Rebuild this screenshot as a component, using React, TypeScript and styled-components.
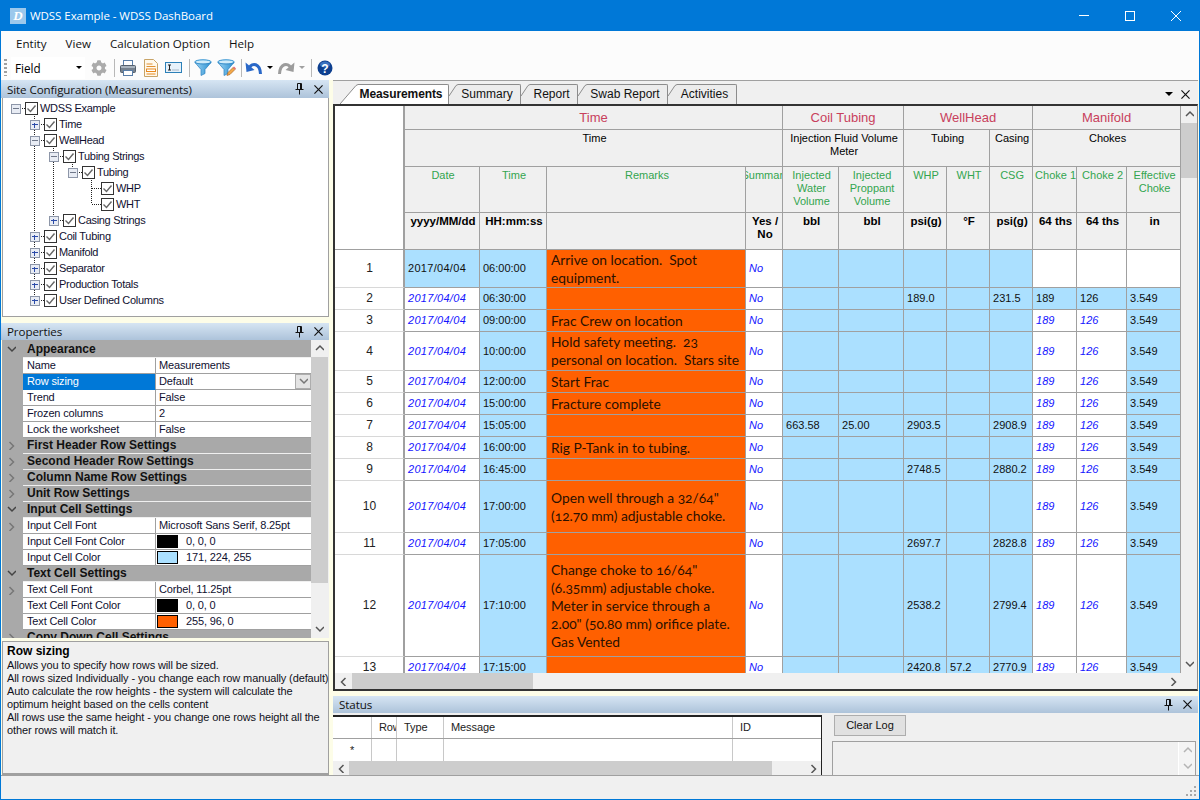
import React from "react";
import styled, { createGlobalStyle } from "styled-components";
import { FaCog } from "react-icons/fa";

const GlobalStyle = createGlobalStyle`
  html, body { margin: 0; padding: 0; background: #fff; }
  * { box-sizing: border-box; }
`;

const UI = `"Liberation Sans", Arial, sans-serif`;
const CHROME = `"Open Sans", "Noto Sans", sans-serif`;
const LINE = "#a0a0a0";
const INPUT = "#abe0ff";

const Win = styled.div`
  width: 1200px;
  height: 800px;
  display: flex;
  flex-direction: column;
  overflow: hidden;
  border: 1px solid #0078d7;
  border-top: 0;
  background: #f0f0f0;
  color: #000;
  font: 11px/13px ${UI};
`;

/* ---------- title / menu / toolbar ---------- */
const TitleBar = styled.div`
  height: 31px;
  flex: none;
  display: flex;
  align-items: center;
  background: #0078d7;
  color: #fff;
  padding-left: 9px;
  font: 11.5px ${CHROME};
`;
const Logo = styled.div`
  width: 16px;
  height: 16px;
  margin-right: 4px;
  background: #9cc8ec;
  display: flex;
  align-items: center;
  justify-content: center;
  font: italic bold 13px "Liberation Serif", serif;
  color: #fff;
`;
const TitleText = styled.span`
  flex: 1;
  letter-spacing: -0.05px;
`;
const WinButton = styled.div`
  width: 46px;
  height: 31px;
  display: flex;
  align-items: center;
  justify-content: center;
`;
const MenuBar = styled.div`
  height: 24px;
  flex: none;
  display: flex;
  align-items: center;
  padding-left: 15px;
  gap: 19px;
  background: #fcfcfc;
  font: 11.6px ${CHROME};
  color: #111;
`;
const ToolBar = styled.div`
  height: 25px;
  flex: none;
  display: flex;
  align-items: center;
  padding-left: 3px;
  background: #fcfcfc;
`;
const Grip = styled.div`
  width: 3px;
  height: 17px;
  margin-right: 4px;
  background: repeating-linear-gradient(to bottom, #a0a0a0 0 2px, transparent 2px 4px);
`;
const Combo = styled.div`
  width: 74px;
  height: 22px;
  margin-right: 3px;
  display: flex;
  align-items: center;
  justify-content: space-between;
  padding: 0 3px 0 4px;
  background: #fff;
  font: 11.7px ${CHROME};
`;
const Caret = styled.div<{ $off?: boolean; $big?: boolean }>`
  width: 0;
  height: 0;
  border-left: ${(p) => (p.$big ? 4 : 3)}px solid transparent;
  border-right: ${(p) => (p.$big ? 4 : 3)}px solid transparent;
  border-top: ${(p) => (p.$big ? 4 : 3)}px solid ${(p) => (p.$off ? "#a0a0a0" : "#000")};
`;
const ToolSep = styled.div<{ $l: number; $r: number }>`
  width: 1px;
  height: 18px;
  background: #b8b8b8;
  margin: 0 ${(p) => p.$r}px 0 ${(p) => p.$l}px;
`;
const Tool = styled.div<{ $w?: number }>`
  width: ${(p) => p.$w ?? 22}px;
  height: 22px;
  flex: none;
  display: flex;
  align-items: center;
  justify-content: center;
`;

/* ---------- docks ---------- */
const Main = styled.div`
  flex: 1;
  min-height: 0;
  display: flex;
  gap: 4px;
  background: #fdfde8;
`;
const LeftCol = styled.div`
  width: 328px;
  flex: none;
  display: flex;
  flex-direction: column;
`;
const DockHeader = styled.div<{ $h: number }>`
  height: ${(p) => p.$h}px;
  flex: none;
  display: flex;
  align-items: center;
  padding: 0 6px 0 6px;
  background: linear-gradient(to bottom, #d6e5f3, #adc3da);
  font: 11.6px ${CHROME};
  letter-spacing: -0.1px;
  color: #111;
`;
const DockTitle = styled.span`
  flex: 1;
`;
const DockButtons = styled.div`
  display: flex;
  align-items: center;
  gap: 10px;
`;
const TreePane = styled.div`
  height: 219px;
  flex: none;
  margin-left: 1px;
  padding: 2px 0 0 3px;
  background: #fff;
  border: 1px solid ${LINE};
  border-top: 0;
`;
const TreeRow = styled.div`
  height: 16px;
  display: flex;
  align-items: center;
`;
const TreeLabel = styled.span`
  margin-left: 2px;
  color: #101030;
  white-space: nowrap;
  letter-spacing: -0.3px;
`;
const DockGap = styled.div`
  height: 6px;
  flex: none;
`;
const PropWrap = styled.div`
  height: 298px;
  flex: none;
  margin: 0 0 3px 1px;
  display: flex;
  overflow: hidden;
  background: #f0f0f0;
`;
const PropList = styled.div`
  width: 309px;
  flex: none;
  padding-top: 2px;
  background: #a9a9a9;
  overflow: hidden;
  letter-spacing: -0.15px;
`;
const PropGroup = styled.div`
  height: 16px;
  display: flex;
  align-items: center;
  background: #a9a9a9;
  border-bottom: 1px solid #f0f0f0;
  font-weight: bold;
  font-size: 12px;
  letter-spacing: 0;
  color: #111;
`;
const Gutter = styled.div`
  width: 21px;
  height: 16px;
  flex: none;
  display: flex;
  align-items: center;
  justify-content: center;
  padding-right: 2px;
  background: #a9a9a9;
`;
const GroupName = styled.span`
  margin-left: 4px;
  white-space: nowrap;
`;
const PropRow = styled.div`
  height: 16px;
  display: flex;
`;
const PropName = styled.div<{ $sel?: boolean }>`
  width: 133px;
  flex: none;
  padding-left: 4px;
  line-height: 15px;
  white-space: nowrap;
  background: ${(p) => (p.$sel ? "#0078d7" : "#fff")};
  color: ${(p) => (p.$sel ? "#fff" : "#101030")};
  border-bottom: 1px solid ${(p) => (p.$sel ? "#0078d7" : LINE)};
  border-right: 1px solid ${LINE};
`;
const PropValue = styled.div`
  flex: 1;
  display: flex;
  align-items: center;
  gap: 8px;
  padding-left: 3px;
  height: 16px;
  white-space: nowrap;
  background: #fff;
  color: #101030;
  border-bottom: 1px solid ${LINE};
`;
const Swatch = styled.span<{ $color: string }>`
  width: 21px;
  height: 13px;
  flex: none;
  margin-left: -2px;
  background: ${(p) => p.$color};
  border: 1px solid #000;
`;
const DropButton = styled.div`
  width: 16px;
  height: 15px;
  margin-left: auto;
  display: flex;
  align-items: center;
  justify-content: center;
  background: #e4e4e4;
  border: 1px solid #adadad;
`;
const PropScroll = styled.div`
  width: 17px;
  flex: none;
  display: flex;
  flex-direction: column;
  background: #f0f0f0;
`;
const ScrollEnd = styled.div<{ $size?: number }>`
  flex: none;
  width: ${(p) => p.$size ?? 16}px;
  height: ${(p) => p.$size ?? 16}px;
  display: flex;
  align-items: center;
  justify-content: center;
`;
const VThumb = styled.div<{ $top: number; $h: number }>`
  flex: none;
  margin-top: ${(p) => p.$top}px;
  height: ${(p) => p.$h}px;
  background: #cdcdcd;
`;
const Spacer = styled.div`
  flex: 1;
`;
const HelpPane = styled.div`
  flex: 1;
  margin-left: 1px;
  padding: 3px 4px 0 4px;
  background: #f0f0f0;
  border: 1px solid ${LINE};
  border-bottom-width: 2px;
  color: #101020;
`;
const HelpTitle = styled.div`
  font-weight: bold;
  font-size: 12px;
  height: 14px;
  color: #000;
`;
const HelpLine = styled.div`
  white-space: nowrap;
  letter-spacing: -0.12px;
`;

/* ---------- right side ---------- */
const RightCol = styled.div`
  flex: 1;
  min-width: 0;
  display: flex;
  flex-direction: column;
  padding-right: 1px;
`;
const TabStrip = styled.div`
  height: 24px;
  flex: none;
  display: flex;
  align-items: flex-end;
  padding-left: 7px;
  background: #f0f0f0;
  border-top: 1px solid ${LINE};
`;
const TabItem = styled.div`
  display: flex;
  height: 20px;
`;
const TabBody = styled.div<{ $active?: boolean; $w: number }>`
  width: ${(p) => p.$w}px;
  height: 20px;
  display: flex;
  align-items: center;
  justify-content: center;
  padding-right: 4px;
  border-top: 1px solid #8c8c8c;
  border-right: 1px solid #8c8c8c;
  background: ${(p) => (p.$active ? "#fff" : "#ececec")};
  font-size: 12px;
  font-weight: ${(p) => (p.$active ? "bold" : "normal")};
  letter-spacing: ${(p) => (p.$active ? "-0.1px" : "0")};
  white-space: nowrap;
  border-radius: 0 2px 0 0;
  color: #111;
`;
const TabButtons = styled.div`
  margin-left: auto;
  height: 20px;
  display: flex;
  align-items: center;
  gap: 8px;
  padding-right: 8px;
`;
const Frame = styled.div`
  height: 587px;
  flex: none;
  display: flex;
  border: 2px solid #333;
  border-right: 1px solid #8c8c8c;
  background: #f0f0f0;
`;
const GridSide = styled.div`
  width: 846px;
  flex: none;
  display: flex;
  flex-direction: column;
`;
const GridViewport = styled.div`
  height: 567px;
  flex: none;
  overflow: hidden;
  background: #fff;
`;
const GridScrollV = styled.div`
  width: 16px;
  flex: none;
  display: flex;
  flex-direction: column;
`;
const HScroll = styled.div<{ $h?: number }>`
  height: ${(p) => p.$h ?? 15}px;
  flex: none;
  display: flex;
  align-items: center;
  background: #f0f0f0;
`;
const HThumb = styled.div<{ $left: number; $w: number }>`
  height: 100%;
  margin-left: ${(p) => p.$left}px;
  width: ${(p) => p.$w}px;
  background: #cdcdcd;
`;

const Table = styled.table`
  table-layout: fixed;
  width: 846px;
  border-collapse: separate;
  border-spacing: 0;
  font: 11px/13px ${UI};
`;
const Corner = styled.th`
  background: #fff;
  border-right: 2px solid ${LINE};
  border-bottom: 1px solid ${LINE};
  padding: 0;
`;
const Head = styled.th<{ $tone: "group" | "sub" | "name" | "unit" }>`
  padding: ${(p) => (p.$tone === "group" ? 0 : 2)}px 0 0 ${(p) => (p.$tone === "group" ? 0 : 2)}px;
  background: #f0f0f0;
  vertical-align: ${(p) => (p.$tone === "group" ? "middle" : "top")};
  border-right: 1px solid ${LINE};
  border-bottom: 1px solid ${LINE};
  overflow: hidden;
  font-weight: ${(p) => (p.$tone === "unit" ? "bold" : "normal")};
  font-size: ${(p) => (p.$tone === "group" ? 13 : p.$tone === "unit" ? 11.5 : 11)}px;
  color: ${(p) => (p.$tone === "group" ? "#c8405c" : p.$tone === "name" ? "#33a54f" : "#000")};
`;
const HeadText = styled.div`
  display: flex;
  justify-content: center;
  white-space: pre;
  text-align: center;
`;
const RowHead = styled.td`
  text-align: center;
  padding: 0 0 0 1px;
  background: #fff;
  border-right: 2px solid ${LINE};
  border-bottom: 1px solid #d8d8d8;
  font-size: 12px;
  color: #222;
`;
const Cell = styled.td<{ $kind: "input" | "calc" | "blank" }>`
  padding: 0 0 0 3px;
  background: ${(p) => (p.$kind === "input" ? INPUT : "#fff")};
  color: ${(p) => (p.$kind === "calc" ? "#1414ff" : "#111")};
  font-style: ${(p) => (p.$kind === "calc" ? "italic" : "normal")};
  border-right: 1px solid ${LINE};
  border-bottom: 1px solid ${LINE};
  white-space: nowrap;
  overflow: hidden;
`;
const DateCell = styled(Cell)`
  letter-spacing: 0.3px;
`;
const RemarkCell = styled.td`
  padding: 0 0 0 4px;
  background: #ff6000;
  color: #2a1000;
  border-right: 1px solid ${LINE};
  border-bottom: 1px solid ${LINE};
  font: 13.8px/18px Lato, "Open Sans", sans-serif;
  font-variant-numeric: oldstyle-nums;
  white-space: pre;
  overflow: hidden;
`;

const StatusPanel = styled.div`
  flex: 1;
  min-height: 0;
  margin-top: 5px;
  display: flex;
  flex-direction: column;
  background: #f0f0f0;
`;
const StatusBody = styled.div`
  flex: 1;
  min-height: 0;
  display: flex;
`;
const LogGrid = styled.div`
  width: 489px;
  flex: none;
  margin-top: 2px;
  display: flex;
  flex-direction: column;
  background: #fff;
  border-top: 2px solid #222;
  border-right: 1px solid #222;
`;
const LogRow = styled.div<{ $h: number; $head?: boolean }>`
  height: ${(p) => p.$h}px;
  flex: none;
  display: grid;
  grid-template-columns: 39px 25px 47px 289px 1fr;
  border-bottom: ${(p) => (p.$head ? `1px solid ${LINE}` : "0")};
`;
const LogCell = styled.div<{ $mark?: boolean }>`
  display: flex;
  align-items: center;
  justify-content: ${(p) => (p.$mark ? "center" : "flex-start")};
  padding-left: ${(p) => (p.$mark ? 0 : 7)}px;
  border-right: 1px solid #c8c8c8;
  overflow: hidden;
  white-space: nowrap;
  letter-spacing: -0.1px;
  color: #222;
  &:last-child {
    border-right: 0;
  }
`;
const LogSide = styled.div`
  flex: 1;
  display: flex;
  flex-direction: column;
  padding: 2px 2px 0 10px;
`;
const ClearButton = styled.div`
  width: 72px;
  height: 21px;
  margin-left: 2px;
  display: flex;
  align-items: center;
  justify-content: center;
  background: #e1e1e1;
  border: 1px solid #adadad;
  color: #111;
`;
const LogBox = styled.div`
  flex: 1;
  margin-top: 5px;
  display: flex;
  justify-content: flex-end;
  background: #f0f0f0;
  border: 1px solid ${LINE};
  border-bottom: 0;
`;
const LogBoxScroll = styled.div`
  width: 17px;
  display: flex;
  flex-direction: column;
  align-items: center;
  background: #f4f4f4;
  border-left: 1px solid #fff;
`;
const StatusBar = styled.div`
  height: 24px;
  flex: none;
  display: flex;
  align-items: flex-end;
  justify-content: flex-end;
  padding: 0 2px 2px 0;
  background: #f0f0f0;
  border-top: 1px solid ${LINE};
`;

/* ---------- drawings ---------- */
const Pin = () => (
  <svg width="9" height="12" viewBox="0 0 9 12" fill="none" stroke="#111">
    <path d="M2.5 .5h4v6h-4zM5.5 1v5.5M.5 6.5h8M4.5 7v4.5" />
  </svg>
);
const CloseX = () => (
  <svg width="9" height="9" viewBox="0 0 10 10" stroke="#111" strokeWidth="1.3">
    <path d="M.5 .5l9 9M9.5 .5l-9 9" />
  </svg>
);
const Chev = ({ dir, color = "#555" }: { dir: "up" | "down" | "left" | "right"; color?: string }) => {
  const d = { up: "M1 6l4-4 4 4", down: "M1 2l4 4 4-4", left: "M6.5 1l-4 4 4 4", right: "M2.5 1l4 4-4 4" }[dir];
  return (
    <svg width="9" height="9" viewBox="0 0 9 9" fill="none" stroke={color} strokeWidth="1.5">
      <path d={d} />
    </svg>
  );
};
const Dots = ({ d }: { d: string }) => <path d={d} stroke="#222" strokeDasharray="1 1" fill="none" />;

/* one 19px wide cell of tree lines: v = vertical guide, exp = +/- box, h = branch */
const TreeCell = ({ v, exp, h }: { v?: "full" | "top"; exp?: "+" | "-"; h?: boolean }) => (
  <svg width="19" height="16" viewBox="0 0 19 16" style={{ flex: "none" }} shapeRendering="crispEdges">
    {v === "full" && <Dots d="M9.5 0V16" />}
    {v === "top" && <Dots d="M9.5 0V8" />}
    {h && <Dots d="M10 8.5H19" />}
    {exp && (
      <>
        <rect x="5.5" y="4.5" width="9" height="9" fill="#e8ecf4" stroke="#8d96a8" />
        <path d="M7 9H13" stroke={exp === "+" ? "#2a4aa8" : "#70788a"} transform="translate(0 -.5)" />
        {exp === "+" && <path d="M10 6.5V11.5" stroke="#2a4aa8" transform="translate(-.5 0)" />}
      </>
    )}
  </svg>
);
const Check = () => (
  <svg width="13" height="13" viewBox="0 0 13 13" style={{ flex: "none" }}>
    <rect x=".5" y=".5" width="12" height="12" fill="#fff" stroke="#333" />
    <path d="M2.5 6.5l3 3 5-6" fill="none" stroke="#666" strokeWidth="1.4" />
  </svg>
);
const Gear = () => <FaCog size={16} color="#ababab" />;
const Printer = () => (
  <svg width="18" height="18" viewBox="0 0 18 18">
    <rect x="4.5" y="1.5" width="9" height="6" fill="#fff" stroke="#5a7ea8" />
    <rect x="1.5" y="6.5" width="15" height="7" rx="1" fill="#77828e" stroke="#56606c" />
    <rect x="2" y="7" width="14" height="2" fill="#aab4be" />
    <rect x="4.5" y="11.5" width="9" height="5" fill="#fff" stroke="#5a7ea8" />
  </svg>
);
const DocIcon = () => (
  <svg width="14" height="18" viewBox="0 0 14 18">
    <path d="M.5 .5h9l4 4v13H.5z" fill="#fff9ec" stroke="#c8a468" />
    <path d="M2.5 5h6M2.5 7.5h9" stroke="#e09030" />
    <rect x="2.5" y="10" width="9" height="2.5" fill="#fff" stroke="#e88a20" />
    <path d="M2.5 15h9" stroke="#e88a20" />
  </svg>
);
const FieldIcon = () => (
  <svg width="17" height="11" viewBox="0 0 17 11">
    <rect x=".5" y=".5" width="16" height="10" fill="#e6f1fa" stroke="#2c80b8" />
    <path d="M3 3h3M3 8h3M4.5 3v5" stroke="#222" fill="none" />
    <path d="M7 8h7" stroke="#a8b8c8" />
  </svg>
);
const Funnel = ({ pencil }: { pencil?: boolean }) => (
  <svg width="19" height="18" viewBox="0 0 19 18">
    <defs>
      <linearGradient id="fn" x1="0" y1="0" x2="1" y2="0">
        <stop offset="0" stopColor="#9ad4f4" />
        <stop offset="1" stopColor="#2a8fd0" />
      </linearGradient>
    </defs>
    <ellipse cx="9" cy="3" rx="8.2" ry="2.2" fill="#d0ecfa" stroke="#2a8fd0" />
    <path d="M1 3.5l6 7v6l4-2v-4l6-7c-3 2-13 2-16 0z" fill="url(#fn)" stroke="#2a80c0" strokeWidth=".7" />
    {pencil && (
      <>
        <path d="M10 16.5l1-3 5-5 2 2-5 5z" fill="#f4a848" stroke="#9a5a20" strokeWidth=".6" />
        <path d="M16 8.5l2 2 1-1-2-2z" fill="#e86870" />
      </>
    )}
  </svg>
);
const ArcArrow = ({ color, flip }: { color: string; flip?: boolean }) => (
  <svg width="18" height="16" viewBox="0 0 18 16" style={{ transform: flip ? "scaleX(-1)" : undefined }}>
    <path d="M4.5 7.5C7 2.5 15 3 15.5 14" fill="none" stroke={color} strokeWidth="3" />
    <path d="M.5 2.5L1.5 12l8-2z" fill={color} />
  </svg>
);
const HelpIcon = () => (
  <svg width="16" height="16" viewBox="0 0 16 16">
    <circle cx="8" cy="8" r="7.5" fill="#0d3f8f" />
    <ellipse cx="8" cy="4.5" rx="5" ry="3" fill="#3a72c0" />
    <text x="8" y="12.5" textAnchor="middle" fontSize="12" fontWeight="bold" fontFamily="Liberation Sans" fill="#fff">?</text>
  </svg>
);
const TabEdge = ({ active }: { active?: boolean }) =>
  active ? (
    <svg width="18" height="20" viewBox="0 0 18 20" style={{ flex: "none" }}>
      <path d="M0 20L16 1.5 18 .5V20z" fill="#fff" />
      <path d="M0 20L16 1.5 18 .5" fill="none" stroke="#8c8c8c" />
    </svg>
  ) : (
    <svg width="9" height="20" viewBox="0 0 9 20" style={{ flex: "none" }}>
      <path d="M0 12L7 1.5 9 .5V20H0z" fill="#ececec" />
      <path d="M0 12L7 1.5 9 .5" fill="none" stroke="#8c8c8c" />
    </svg>
  );

/* ---------- data ---------- */
type TreeItem = { label: string; cells: Array<{ v?: "full" | "top"; exp?: "+" | "-"; h?: boolean }> };
const P = (exp: "+" | "-", v: "full" | "top" = "full") => ({ v, exp, h: true });
const G = { v: "full" as const };
const E = {};
const tree: TreeItem[] = [
  { label: "WDSS Example", cells: [{ exp: "-", h: true }] },
  { label: "Time", cells: [E, P("+")] },
  { label: "WellHead", cells: [E, P("-")] },
  { label: "Tubing Strings", cells: [E, G, P("-")] },
  { label: "Tubing", cells: [E, G, G, P("-", "top")] },
  { label: "WHP", cells: [E, G, G, E, { v: "full", h: true }] },
  { label: "WHT", cells: [E, G, G, E, { v: "top", h: true }] },
  { label: "Casing Strings", cells: [E, G, P("+", "top")] },
  { label: "Coil Tubing", cells: [E, P("+")] },
  { label: "Manifold", cells: [E, P("+")] },
  { label: "Separator", cells: [E, P("+")] },
  { label: "Production Totals", cells: [E, P("+")] },
  { label: "User Defined Columns", cells: [E, P("+", "top")] },
];

type Prop =
  | { group: string; open?: boolean }
  | { name: string; value: string; color?: string; sel?: boolean; more?: boolean };
const props: Prop[] = [
  { group: "Appearance", open: true },
  { name: "Name", value: "Measurements" },
  { name: "Row sizing", value: "Default", sel: true },
  { name: "Trend", value: "False" },
  { name: "Frozen columns", value: "2" },
  { name: "Lock the worksheet", value: "False" },
  { group: "First Header Row Settings" },
  { group: "Second Header Row Settings" },
  { group: "Column Name Row Settings" },
  { group: "Unit Row Settings" },
  { group: "Input Cell Settings", open: true },
  { name: "Input Cell Font", value: "Microsoft Sans Serif, 8.25pt", more: true },
  { name: "Input Cell Font Color", value: "0, 0, 0", color: "#000" },
  { name: "Input Cell Color", value: "171, 224, 255", color: INPUT },
  { group: "Text Cell Settings", open: true },
  { name: "Text Cell Font", value: "Corbel, 11.25pt", more: true },
  { name: "Text Cell Font Color", value: "0, 0, 0", color: "#000" },
  { name: "Text Cell Color", value: "255, 96, 0", color: "#ff6000" },
  { group: "Copy Down Cell Settings" },
];

const helpLines = [
  "Allows you to specify how rows will be sized.",
  "All rows sized Individually - you change each row manually (default)",
  "Auto calculate the row heights - the system will calculate the",
  "optimum height based on the cells content",
  "All rows use the same height - you change one rows height all the",
  "other rows will match it.",
];

const tabs = [
  { label: "Measurements", w: 91, active: true },
  { label: "Summary", w: 63 },
  { label: "Report", w: 48 },
  { label: "Swab Report", w: 81 },
  { label: "Activities", w: 60 },
];

const widths = [70, 75, 67, 199, 37, 56, 65, 43, 43, 43, 44, 50, 54];

const names = ["Date", "Time", "Remarks", "Summary", "Injected\nWater\nVolume", "Injected\nProppant\nVolume", "WHP", "WHT", "CSG", "Choke 1", "Choke 2", "Effective\nChoke"];
const units = ["yyyy/MM/dd", "HH:mm:ss", "", "Yes /\nNo", "bbl", "bbl", "psi(g)", "°F", "psi(g)", "64 ths", "64 ths", "in"];

type Row = {
  h: number;
  time: string;
  remark?: string;
  water?: string;
  prop?: string;
  whp?: string;
  wht?: string;
  csg?: string;
};
const rows: Row[] = [
  { h: 38, time: "06:00:00", remark: "Arrive on location.  Spot\nequipment." },
  { h: 22, time: "06:30:00", whp: "189.0", csg: "231.5" },
  { h: 22, time: "09:00:00", remark: "Frac Crew on location" },
  { h: 39, time: "10:00:00", remark: "Hold safety meeting.  23\npersonal on location.  Stars site" },
  { h: 22, time: "12:00:00", remark: "Start Frac" },
  { h: 22, time: "15:00:00", remark: "Fracture complete" },
  { h: 22, time: "15:05:00", water: "663.58", prop: "25.00", whp: "2903.5", csg: "2908.9" },
  { h: 22, time: "16:00:00", remark: "Rig P-Tank in to tubing." },
  { h: 22, time: "16:45:00", whp: "2748.5", csg: "2880.2" },
  { h: 52, time: "17:00:00", remark: "Open well through a 32/64\"\n(12.70 mm) adjustable choke." },
  { h: 22, time: "17:05:00", whp: "2697.7", csg: "2828.8" },
  {
    h: 102,
    time: "17:10:00",
    remark: "Change choke to 16/64\"\n(6.35mm) adjustable choke.\nMeter in service through a\n2.00\" (50.80 mm) orifice plate.\nGas Vented",
    whp: "2538.2",
    csg: "2799.4",
  },
  { h: 22, time: "17:15:00", whp: "2420.8", wht: "57.2", csg: "2770.9" },
];

const DockTools = () => (
  <DockButtons>
    <Pin />
    <CloseX />
  </DockButtons>
);

export default function App() {
  return (
    <Win>
      <GlobalStyle />
      <TitleBar>
        <Logo>D</Logo>
        <TitleText>WDSS Example - WDSS DashBoard</TitleText>
        <WinButton>
          <svg width="10" height="1"><rect width="10" height="1" fill="#fff" /></svg>
        </WinButton>
        <WinButton>
          <svg width="10" height="10"><rect x=".5" y=".5" width="9" height="9" fill="none" stroke="#fff" /></svg>
        </WinButton>
        <WinButton>
          <svg width="10" height="10" stroke="#fff"><path d="M0 0l10 10M10 0L0 10" /></svg>
        </WinButton>
      </TitleBar>
      <MenuBar>
        <span>Entity</span>
        <span>View</span>
        <span>Calculation Option</span>
        <span>Help</span>
      </MenuBar>
      <ToolBar>
        <Grip />
        <Combo>
          Field
          <Caret />
        </Combo>
        <Tool><Gear /></Tool>
        <ToolSep $l={4} $r={2} />
        <Tool><Printer /></Tool>
        <Tool $w={23}><DocIcon /></Tool>
        <Tool><FieldIcon /></Tool>
        <ToolSep $l={5} $r={2} />
        <Tool $w={23}><Funnel /></Tool>
        <Tool><Funnel pencil /></Tool>
        <ToolSep $l={4} $r={1} />
        <Tool><ArcArrow color="#2a68c8" /></Tool>
        <Tool $w={10}><Caret /></Tool>
        <Tool><ArcArrow color="#9c9c9c" flip /></Tool>
        <Tool $w={10}><Caret $off /></Tool>
        <ToolSep $l={4} $r={2} />
        <Tool><HelpIcon /></Tool>
      </ToolBar>
      <Main>
        <LeftCol>
          <DockHeader $h={18}>
            <DockTitle>Site Configuration (Measurements)</DockTitle>
            <DockTools />
          </DockHeader>
          <TreePane>
            {tree.map((t) => (
              <TreeRow key={t.label}>
                {t.cells.map((c, i) => (
                  <TreeCell key={i} {...c} />
                ))}
                <Check />
                <TreeLabel>{t.label}</TreeLabel>
              </TreeRow>
            ))}
          </TreePane>
          <DockGap />
          <DockHeader $h={17}>
            <DockTitle>Properties</DockTitle>
            <DockTools />
          </DockHeader>
          <PropWrap>
            <PropList>
              {props.map((p) =>
                "group" in p ? (
                  <PropGroup key={p.group}>
                    <Gutter>
                      <Chev dir={p.open ? "down" : "right"} color={p.open ? "#444" : "#777"} />
                    </Gutter>
                    <GroupName>{p.group}</GroupName>
                  </PropGroup>
                ) : (
                  <PropRow key={p.name}>
                    <Gutter>{p.more && <Chev dir="right" color="#777" />}</Gutter>
                    <PropName $sel={p.sel}>{p.name}</PropName>
                    <PropValue>
                      {p.color && <Swatch $color={p.color} />}
                      {p.value}
                      {p.sel && (
                        <DropButton>
                          <Chev dir="down" color="#777" />
                        </DropButton>
                      )}
                    </PropValue>
                  </PropRow>
                ),
              )}
            </PropList>
            <PropScroll>
              <ScrollEnd $size={17}><Chev dir="up" /></ScrollEnd>
              <VThumb $top={0} $h={226} />
              <Spacer />
              <ScrollEnd $size={17}><Chev dir="down" /></ScrollEnd>
            </PropScroll>
          </PropWrap>
          <HelpPane>
            <HelpTitle>Row sizing</HelpTitle>
            {helpLines.map((l) => (
              <HelpLine key={l}>{l}</HelpLine>
            ))}
          </HelpPane>
        </LeftCol>

        <RightCol>
          <TabStrip>
            {tabs.map((t) => (
              <TabItem key={t.label}>
                <TabEdge active={t.active} />
                <TabBody $active={t.active} $w={t.w}>{t.label}</TabBody>
              </TabItem>
            ))}
            <TabButtons>
              <Caret $big />
              <CloseX />
            </TabButtons>
          </TabStrip>
          <Frame>
            <GridSide>
              <GridViewport>
                <Table>
                  <colgroup>
                    {widths.map((w, i) => (
                      <col key={i} style={{ width: w }} />
                    ))}
                  </colgroup>
                  <thead>
                    <tr style={{ height: 24 }}>
                      <Corner rowSpan={4} />
                      <Head $tone="group" colSpan={4}><HeadText>Time</HeadText></Head>
                      <Head $tone="group" colSpan={2}><HeadText>Coil Tubing</HeadText></Head>
                      <Head $tone="group" colSpan={3}><HeadText>WellHead</HeadText></Head>
                      <Head $tone="group" colSpan={3}><HeadText>Manifold</HeadText></Head>
                    </tr>
                    <tr style={{ height: 37 }}>
                      <Head $tone="sub" colSpan={4}><HeadText>Time</HeadText></Head>
                      <Head $tone="sub" colSpan={2}><HeadText>{"Injection Fluid Volume\nMeter"}</HeadText></Head>
                      <Head $tone="sub" colSpan={2}><HeadText>Tubing</HeadText></Head>
                      <Head $tone="sub"><HeadText>Casing</HeadText></Head>
                      <Head $tone="sub" colSpan={3}><HeadText>Chokes</HeadText></Head>
                    </tr>
                    <tr style={{ height: 46 }}>
                      {names.map((n) => (
                        <Head key={n} $tone="name"><HeadText>{n}</HeadText></Head>
                      ))}
                    </tr>
                    <tr style={{ height: 37 }}>
                      {units.map((u, i) => (
                        <Head key={i} $tone="unit"><HeadText>{u}</HeadText></Head>
                      ))}
                    </tr>
                  </thead>
                  <tbody>
                    {rows.map((r, i) => {
                      const first = i === 0;
                      const second = i === 1;
                      const choke = first ? "blank" : second ? "input" : "calc";
                      return (
                        <tr key={i} style={{ height: r.h }}>
                          <RowHead>{i + 1}</RowHead>
                          <DateCell $kind={first ? "input" : "calc"}>2017/04/04</DateCell>
                          <Cell $kind="input">{r.time}</Cell>
                          <RemarkCell>{r.remark}</RemarkCell>
                          <Cell $kind="calc">No</Cell>
                          <Cell $kind="input">{r.water}</Cell>
                          <Cell $kind="input">{r.prop}</Cell>
                          <Cell $kind="input">{r.whp}</Cell>
                          <Cell $kind="input">{r.wht}</Cell>
                          <Cell $kind="input">{r.csg}</Cell>
                          <Cell $kind={choke}>{first ? "" : "189"}</Cell>
                          <Cell $kind={choke}>{first ? "" : "126"}</Cell>
                          <Cell $kind={first ? "blank" : "input"}>{first ? "" : "3.549"}</Cell>
                        </tr>
                      );
                    })}
                  </tbody>
                </Table>
              </GridViewport>
              <HScroll $h={16}>
                <ScrollEnd><Chev dir="left" /></ScrollEnd>
                <HThumb $left={1} $w={181} />
                <Spacer />
                <ScrollEnd><Chev dir="right" /></ScrollEnd>
              </HScroll>
            </GridSide>
            <GridScrollV>
              <ScrollEnd><Chev dir="up" /></ScrollEnd>
              <VThumb $top={1} $h={55} />
              <Spacer />
              <ScrollEnd><Chev dir="down" /></ScrollEnd>
              <ScrollEnd $size={17} />
            </GridScrollV>
          </Frame>
          <StatusPanel>
            <DockHeader $h={17}>
              <DockTitle>Status</DockTitle>
              <DockTools />
            </DockHeader>
            <StatusBody>
              <LogGrid>
                <LogRow $h={22} $head>
                  <LogCell />
                  <LogCell>Row</LogCell>
                  <LogCell>Type</LogCell>
                  <LogCell>Message</LogCell>
                  <LogCell>ID</LogCell>
                </LogRow>
                <LogRow $h={22}>
                  <LogCell $mark>*</LogCell>
                  <LogCell />
                  <LogCell />
                  <LogCell />
                  <LogCell />
                </LogRow>
                <HScroll $h={14}>
                  <ScrollEnd><Chev dir="left" /></ScrollEnd>
                  <HThumb $left={0} $w={423} />
                  <Spacer />
                  <ScrollEnd><Chev dir="right" /></ScrollEnd>
                </HScroll>
              </LogGrid>
              <LogSide>
                <ClearButton>Clear Log</ClearButton>
                <LogBox>
                  <LogBoxScroll>
                    <ScrollEnd><Chev dir="up" color="#b4b4b4" /></ScrollEnd>
                    <ScrollEnd><Chev dir="down" color="#b4b4b4" /></ScrollEnd>
                  </LogBoxScroll>
                </LogBox>
              </LogSide>
            </StatusBody>
          </StatusPanel>
        </RightCol>
      </Main>
      <StatusBar>
        <svg width="11" height="11" viewBox="0 0 11 11" fill="#a8a8a8">
          <rect x="8" y="0" width="2" height="2" />
          <rect x="4" y="4" width="2" height="2" />
          <rect x="8" y="4" width="2" height="2" />
          <rect x="0" y="8" width="2" height="2" />
          <rect x="4" y="8" width="2" height="2" />
          <rect x="8" y="8" width="2" height="2" />
        </svg>
      </StatusBar>
    </Win>
  );
}
